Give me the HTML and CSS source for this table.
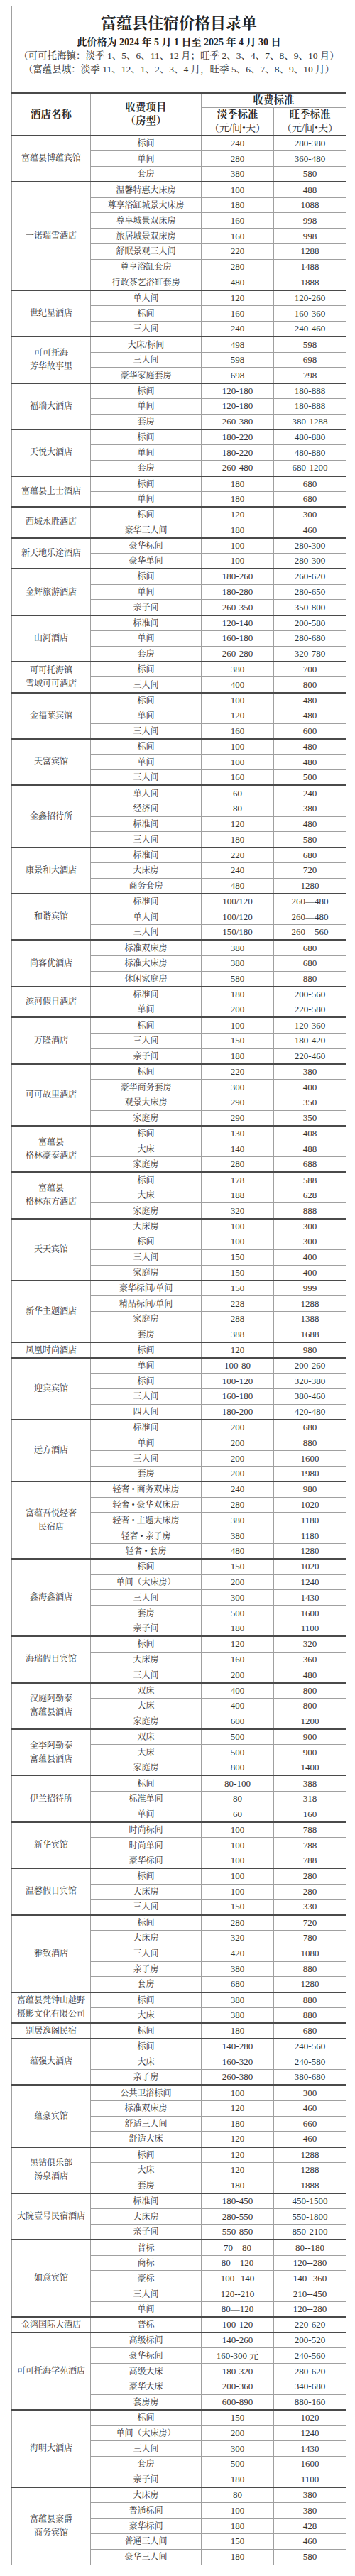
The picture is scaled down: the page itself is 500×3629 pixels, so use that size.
FILE: index.html
```html
<!DOCTYPE html>
<html lang="zh-CN">
<head>
<meta charset="utf-8">
<title>富蕴县住宿价格目录单</title>
<link rel="stylesheet" href="styles.css">
</head>
<body>
<div class="sheet">
<table class="price-table">
<colgroup>
<col class="c-name"><col class="c-type"><col class="c-low"><col class="c-high">
</colgroup>
<thead>
<tr class="title-row"><th colspan="4" class="title-cell">
<div class="title-block">
<div class="title">富蕴县住宿价格目录单</div>
<div class="subtitle">此价格为 2024 年 5 月 1 日至 2025 年 4 月 30 日</div>
<div class="note">（可可托海镇：淡季 1、5、6、11、12 月；旺季 2、3、4、7、8、9、10 月）</div>
<div class="note">（富蕴县城：淡季 11、12、1、2、3、4 月，旺季 5、6、7、8、9、10 月）</div>
</div>
</th></tr>
<tr class="head1"><th rowspan="2" class="hd">酒店名称</th><th rowspan="2" class="hd">收费项目<br>（房型）</th><th colspan="2" class="hd">收费标准</th></tr>
<tr class="head2"><th class="hd">淡季标准<br><span class="unit">（元/间•天）</span></th><th class="hd">旺季标准<br><span class="unit">（元/间•天）</span></th></tr>
</thead>
<tbody>
<tr class="g"><td rowspan="3" class="name">富蕴县博蕴宾馆</td><td>标间</td><td class="n">240</td><td class="n">280-380</td></tr>
<tr><td>单间</td><td class="n">280</td><td class="n">360-480</td></tr>
<tr><td>套房</td><td class="n">380</td><td class="n">580</td></tr>

<tr class="g"><td rowspan="7" class="name">一诺瑞雪酒店</td><td>温馨特惠大床房</td><td class="n">100</td><td class="n">488</td></tr>
<tr><td>尊享浴缸城景大床房</td><td class="n">180</td><td class="n">1088</td></tr>
<tr><td>尊享城景双床房</td><td class="n">160</td><td class="n">998</td></tr>
<tr><td>旅居城景双床房</td><td class="n">160</td><td class="n">998</td></tr>
<tr><td>舒眠景观三人间</td><td class="n">220</td><td class="n">1288</td></tr>
<tr><td>尊享浴缸套房</td><td class="n">280</td><td class="n">1488</td></tr>
<tr><td>行政茶艺浴缸套房</td><td class="n">480</td><td class="n">1888</td></tr>

<tr class="g"><td rowspan="3" class="name">世纪星酒店</td><td>单人间</td><td class="n">120</td><td class="n">120-260</td></tr>
<tr><td>标间</td><td class="n">160</td><td class="n">160-360</td></tr>
<tr><td>三人间</td><td class="n">240</td><td class="n">240-460</td></tr>

<tr class="g"><td rowspan="3" class="name">可可托海<br>芳华故事里</td><td>大床/标间</td><td class="n">498</td><td class="n">598</td></tr>
<tr><td>三人间</td><td class="n">598</td><td class="n">698</td></tr>
<tr><td>豪华家庭套房</td><td class="n">698</td><td class="n">798</td></tr>

<tr class="g"><td rowspan="3" class="name">福瑞大酒店</td><td>标间</td><td class="n">120-180</td><td class="n">180-888</td></tr>
<tr><td>单间</td><td class="n">120-180</td><td class="n">180-888</td></tr>
<tr><td>套房</td><td class="n">260-380</td><td class="n">380-1288</td></tr>

<tr class="g"><td rowspan="3" class="name">天悦大酒店</td><td>标间</td><td class="n">180-220</td><td class="n">480-880</td></tr>
<tr><td>单间</td><td class="n">180-220</td><td class="n">480-880</td></tr>
<tr><td>套房</td><td class="n">260-480</td><td class="n">680-1200</td></tr>

<tr class="g"><td rowspan="2" class="name">富蕴县上士酒店</td><td>标间</td><td class="n">180</td><td class="n">680</td></tr>
<tr><td>单间</td><td class="n">180</td><td class="n">680</td></tr>

<tr class="g"><td rowspan="2" class="name">西域永胜酒店</td><td>标间</td><td class="n">120</td><td class="n">300</td></tr>
<tr><td>豪华三人间</td><td class="n">180</td><td class="n">460</td></tr>

<tr class="g"><td rowspan="2" class="name">新天地乐途酒店</td><td>豪华标间</td><td class="n">100</td><td class="n">280-300</td></tr>
<tr><td>豪华单间</td><td class="n">100</td><td class="n">280-300</td></tr>

<tr class="g"><td rowspan="3" class="name">金辉旅游酒店</td><td>标间</td><td class="n">180-260</td><td class="n">260-620</td></tr>
<tr><td>单间</td><td class="n">180-280</td><td class="n">280-650</td></tr>
<tr><td>亲子间</td><td class="n">260-350</td><td class="n">350-800</td></tr>

<tr class="g"><td rowspan="3" class="name">山河酒店</td><td>标准间</td><td class="n">120-140</td><td class="n">200-580</td></tr>
<tr><td>单间</td><td class="n">160-180</td><td class="n">280-680</td></tr>
<tr><td>套房</td><td class="n">260-280</td><td class="n">320-780</td></tr>

<tr class="g"><td rowspan="2" class="name">可可托海镇<br>雪域可可酒店</td><td>标间</td><td class="n">380</td><td class="n">700</td></tr>
<tr><td>三人间</td><td class="n">400</td><td class="n">800</td></tr>

<tr class="g"><td rowspan="3" class="name">金福莱宾馆</td><td>标间</td><td class="n">100</td><td class="n">480</td></tr>
<tr><td>单间</td><td class="n">120</td><td class="n">480</td></tr>
<tr><td>三人间</td><td class="n">160</td><td class="n">600</td></tr>

<tr class="g"><td rowspan="3" class="name">天富宾馆</td><td>标间</td><td class="n">100</td><td class="n">480</td></tr>
<tr><td>单间</td><td class="n">100</td><td class="n">480</td></tr>
<tr><td>三人间</td><td class="n">160</td><td class="n">500</td></tr>

<tr class="g"><td rowspan="4" class="name">金鑫招待所</td><td>单人间</td><td class="n">60</td><td class="n">240</td></tr>
<tr><td>经济间</td><td class="n">80</td><td class="n">380</td></tr>
<tr><td>标准间</td><td class="n">120</td><td class="n">480</td></tr>
<tr><td>三人间</td><td class="n">180</td><td class="n">580</td></tr>

<tr class="g"><td rowspan="3" class="name">康景和大酒店</td><td>标准间</td><td class="n">220</td><td class="n">680</td></tr>
<tr><td>大床房</td><td class="n">240</td><td class="n">720</td></tr>
<tr><td>商务套房</td><td class="n">480</td><td class="n">1280</td></tr>

<tr class="g"><td rowspan="3" class="name">和谐宾馆</td><td>标准间</td><td class="n">100/120</td><td class="n">260—480</td></tr>
<tr><td>单人间</td><td class="n">100/120</td><td class="n">260—480</td></tr>
<tr><td>三人间</td><td class="n">150/180</td><td class="n">260—560</td></tr>

<tr class="g"><td rowspan="3" class="name">尚客优酒店</td><td>标准双床房</td><td class="n">380</td><td class="n">680</td></tr>
<tr><td>标准大床房</td><td class="n">380</td><td class="n">680</td></tr>
<tr><td>休闲家庭房</td><td class="n">580</td><td class="n">880</td></tr>

<tr class="g"><td rowspan="2" class="name">滨河假日酒店</td><td>标准间</td><td class="n">180</td><td class="n">200-560</td></tr>
<tr><td>单间</td><td class="n">200</td><td class="n">220-580</td></tr>

<tr class="g"><td rowspan="3" class="name">万隆酒店</td><td>标间</td><td class="n">100</td><td class="n">120-360</td></tr>
<tr><td>三人间</td><td class="n">150</td><td class="n">180-420</td></tr>
<tr><td>亲子间</td><td class="n">180</td><td class="n">220-460</td></tr>

<tr class="g"><td rowspan="4" class="name">可可故里酒店</td><td>标间</td><td class="n">220</td><td class="n">380</td></tr>
<tr><td>豪华商务套房</td><td class="n">300</td><td class="n">400</td></tr>
<tr><td>观景大床房</td><td class="n">290</td><td class="n">350</td></tr>
<tr><td>家庭房</td><td class="n">290</td><td class="n">350</td></tr>

<tr class="g"><td rowspan="3" class="name">富蕴县<br>格林豪泰酒店</td><td>标间</td><td class="n">130</td><td class="n">408</td></tr>
<tr><td>大床</td><td class="n">140</td><td class="n">488</td></tr>
<tr><td>家庭房</td><td class="n">280</td><td class="n">688</td></tr>

<tr class="g"><td rowspan="3" class="name">富蕴县<br>格林东方酒店</td><td>标间</td><td class="n">178</td><td class="n">588</td></tr>
<tr><td>大床</td><td class="n">188</td><td class="n">628</td></tr>
<tr><td>家庭房</td><td class="n">320</td><td class="n">888</td></tr>

<tr class="g"><td rowspan="4" class="name">天天宾馆</td><td>大床房</td><td class="n">100</td><td class="n">300</td></tr>
<tr><td>标间</td><td class="n">100</td><td class="n">300</td></tr>
<tr><td>三人间</td><td class="n">150</td><td class="n">400</td></tr>
<tr><td>家庭房</td><td class="n">150</td><td class="n">400</td></tr>

<tr class="g"><td rowspan="4" class="name">新华主题酒店</td><td>豪华标间/单间</td><td class="n">150</td><td class="n">999</td></tr>
<tr><td>精品标间/单间</td><td class="n">228</td><td class="n">1288</td></tr>
<tr><td>家庭房</td><td class="n">288</td><td class="n">1388</td></tr>
<tr><td>套房</td><td class="n">388</td><td class="n">1688</td></tr>

<tr class="g"><td class="name">凤凰时尚酒店</td><td>标间</td><td class="n">120</td><td class="n">980</td></tr>

<tr class="g"><td rowspan="4" class="name">迎宾宾馆</td><td>单间</td><td class="n">100-80</td><td class="n">200-260</td></tr>
<tr><td>标间</td><td class="n">100-120</td><td class="n">320-380</td></tr>
<tr><td>三人间</td><td class="n">160-180</td><td class="n">380-460</td></tr>
<tr><td>四人间</td><td class="n">180-200</td><td class="n">420-480</td></tr>

<tr class="g"><td rowspan="4" class="name">远方酒店</td><td>标准间</td><td class="n">200</td><td class="n">680</td></tr>
<tr><td>单间</td><td class="n">200</td><td class="n">880</td></tr>
<tr><td>三人间</td><td class="n">200</td><td class="n">1600</td></tr>
<tr><td>套房</td><td class="n">200</td><td class="n">1980</td></tr>

<tr class="g"><td rowspan="5" class="name">富蕴吾悦轻奢<br>民宿店</td><td>轻奢 • 商务双床房</td><td class="n">240</td><td class="n">980</td></tr>
<tr><td>轻奢 • 豪华双床房</td><td class="n">280</td><td class="n">1020</td></tr>
<tr><td>轻奢 • 主题大床房</td><td class="n">380</td><td class="n">1180</td></tr>
<tr><td>轻奢 • 亲子房</td><td class="n">380</td><td class="n">1180</td></tr>
<tr><td>轻奢 • 套房</td><td class="n">480</td><td class="n">1280</td></tr>

<tr class="g"><td rowspan="5" class="name">鑫海鑫酒店</td><td>标间</td><td class="n">150</td><td class="n">1020</td></tr>
<tr><td>单间（大床房）</td><td class="n">200</td><td class="n">1240</td></tr>
<tr><td>三人间</td><td class="n">300</td><td class="n">1430</td></tr>
<tr><td>套房</td><td class="n">500</td><td class="n">1600</td></tr>
<tr><td>亲子间</td><td class="n">180</td><td class="n">1100</td></tr>

<tr class="g"><td rowspan="3" class="name">海瑞假日宾馆</td><td>标间</td><td class="n">120</td><td class="n">320</td></tr>
<tr><td>大床房</td><td class="n">160</td><td class="n">360</td></tr>
<tr><td>三人间</td><td class="n">200</td><td class="n">480</td></tr>

<tr class="g"><td rowspan="3" class="name">汉庭阿勒泰<br>富蕴县酒店</td><td>双床</td><td class="n">400</td><td class="n">800</td></tr>
<tr><td>大床</td><td class="n">400</td><td class="n">800</td></tr>
<tr><td>家庭房</td><td class="n">600</td><td class="n">1200</td></tr>

<tr class="g"><td rowspan="3" class="name">全季阿勒泰<br>富蕴县酒店</td><td>双床</td><td class="n">500</td><td class="n">900</td></tr>
<tr><td>大床</td><td class="n">500</td><td class="n">900</td></tr>
<tr><td>家庭房</td><td class="n">800</td><td class="n">1400</td></tr>

<tr class="g"><td rowspan="3" class="name">伊兰招待所</td><td>标间</td><td class="n">80-100</td><td class="n">388</td></tr>
<tr><td>标准单间</td><td class="n">80</td><td class="n">318</td></tr>
<tr><td>单间</td><td class="n">60</td><td class="n">160</td></tr>

<tr class="g"><td rowspan="3" class="name">新华宾馆</td><td>时尚标间</td><td class="n">100</td><td class="n">788</td></tr>
<tr><td>时尚单间</td><td class="n">100</td><td class="n">788</td></tr>
<tr><td>豪华标间</td><td class="n">100</td><td class="n">788</td></tr>

<tr class="g"><td rowspan="3" class="name">温馨假日宾馆</td><td>标间</td><td class="n">100</td><td class="n">280</td></tr>
<tr><td>大床房</td><td class="n">100</td><td class="n">280</td></tr>
<tr><td>三人间</td><td class="n">150</td><td class="n">330</td></tr>

<tr class="g"><td rowspan="5" class="name">雅致酒店</td><td>标间</td><td class="n">280</td><td class="n">720</td></tr>
<tr><td>大床房</td><td class="n">320</td><td class="n">780</td></tr>
<tr><td>三人间</td><td class="n">420</td><td class="n">1080</td></tr>
<tr><td>亲子房</td><td class="n">380</td><td class="n">880</td></tr>
<tr><td>套房</td><td class="n">680</td><td class="n">1280</td></tr>

<tr class="g"><td rowspan="2" class="name">富蕴县梵钟山越野<br>摄影文化有限公司</td><td>标间</td><td class="n">380</td><td class="n">880</td></tr>
<tr><td>大床</td><td class="n">380</td><td class="n">880</td></tr>

<tr class="g"><td class="name">别居逸阁民宿</td><td>标间</td><td class="n">180</td><td class="n">680</td></tr>

<tr class="g"><td rowspan="3" class="name">蕴强大酒店</td><td>标间</td><td class="n">140-280</td><td class="n">240-560</td></tr>
<tr><td>大床</td><td class="n">160-320</td><td class="n">240-580</td></tr>
<tr><td>亲子房</td><td class="n">260-380</td><td class="n">380-680</td></tr>

<tr class="g"><td rowspan="4" class="name">蕴豪宾馆</td><td>公共卫浴标间</td><td class="n">100</td><td class="n">300</td></tr>
<tr><td>标准双床房</td><td class="n">120</td><td class="n">460</td></tr>
<tr><td>舒适三人间</td><td class="n">180</td><td class="n">660</td></tr>
<tr><td>舒适大床</td><td class="n">120</td><td class="n">460</td></tr>

<tr class="g"><td rowspan="3" class="name">黑钻俱乐部<br>汤泉酒店</td><td>标间</td><td class="n">120</td><td class="n">1288</td></tr>
<tr><td>大床</td><td class="n">120</td><td class="n">1288</td></tr>
<tr><td>套房</td><td class="n">180</td><td class="n">1888</td></tr>

<tr class="g"><td rowspan="3" class="name">大院壹号民宿酒店</td><td>标准间</td><td class="n">180-450</td><td class="n">450-1500</td></tr>
<tr><td>大床房</td><td class="n">280-550</td><td class="n">550-1800</td></tr>
<tr><td>亲子间</td><td class="n">550-850</td><td class="n">850-2100</td></tr>

<tr class="g"><td rowspan="5" class="name">如意宾馆</td><td>普标</td><td class="n">70—80</td><td class="n">80--180</td></tr>
<tr><td>商标</td><td class="n">80—120</td><td class="n">120--280</td></tr>
<tr><td>豪标</td><td class="n">100--140</td><td class="n">140--360</td></tr>
<tr><td>三人间</td><td class="n">120--210</td><td class="n">210--450</td></tr>
<tr><td>单间</td><td class="n">80—120</td><td class="n">120--280</td></tr>

<tr class="g"><td class="name">金鸿国际大酒店</td><td>普标</td><td class="n">100-120</td><td class="n">220-620</td></tr>

<tr class="g"><td rowspan="5" class="name">可可托海学苑酒店</td><td>高级标间</td><td class="n">140-260</td><td class="n">200-520</td></tr>
<tr><td>豪华标间</td><td class="n">160-300 元</td><td class="n">240-560</td></tr>
<tr><td>高级大床</td><td class="n">180-320</td><td class="n">280-620</td></tr>
<tr><td>豪华大床</td><td class="n">200-360</td><td class="n">340-680</td></tr>
<tr><td>套房房</td><td class="n">600-890</td><td class="n">880-160</td></tr>

<tr class="g"><td rowspan="5" class="name">海明大酒店</td><td>标间</td><td class="n">150</td><td class="n">1020</td></tr>
<tr><td>单间（大床房）</td><td class="n">200</td><td class="n">1240</td></tr>
<tr><td>三人间</td><td class="n">300</td><td class="n">1430</td></tr>
<tr><td>套房</td><td class="n">500</td><td class="n">1600</td></tr>
<tr><td>亲子间</td><td class="n">180</td><td class="n">1100</td></tr>

<tr class="g"><td rowspan="5" class="name">富蕴县豪爵<br>商务宾馆</td><td>大床房</td><td class="n">80</td><td class="n">380</td></tr>
<tr><td>普通标间</td><td class="n">100</td><td class="n">380</td></tr>
<tr><td>豪华标间</td><td class="n">180</td><td class="n">428</td></tr>
<tr><td>普通三人间</td><td class="n">150</td><td class="n">460</td></tr>
<tr><td>豪华三人间</td><td class="n">180</td><td class="n">580</td></tr>
</tbody>
</table>
</div>
</body>
</html>
```
FILE: styles.css
```css
html, body {
  margin: 0;
  padding: 0;
  background: #ffffff;
}

.sheet {
  margin: 8px 0 0 16px;
  width: 471px;
}

.price-table {
  width: 471px;
  border-collapse: collapse;
  table-layout: fixed;
  font-family: "Liberation Serif", "Noto Serif CJK SC", "Noto Sans CJK SC", serif;
  color: #333333;
  font-size: 12px;
}

.c-name { width: 111px; }
.c-type { width: 156px; }
.c-low { width: 102px; }
.c-high { width: 102px; }

.price-table th,
.price-table td {
  border: 1px solid #a0a0a0;
  padding: 0;
  text-align: center;
  vertical-align: middle;
  white-space: nowrap;
  line-height: 16px;
  font-weight: normal;
}

.price-table tbody tr {
  height: 21.8px;
}

.price-table tr.g td {
  border-top: 2px solid #4a4a4a;
}

.price-table td.n {
  font-size: 13px;
}

.price-table td.name {
  line-height: 19px;
}

.title-cell {
  height: 121px;
  border-bottom: 2px solid #4a4a4a !important;
}

.title-block {
  display: flex;
  flex-direction: column;
  align-items: center;
  padding: 0 0 12px;
}

.title {
  font-size: 22px;
  line-height: 26px;
  font-weight: bold;
  color: #222222;
}

.subtitle {
  margin-top: 4px;
  font-size: 14px;
  line-height: 19px;
  font-weight: bold;
  color: #222222;
}

.note {
  font-size: 13.5px;
  line-height: 19px;
  color: #333333;
}

.head1 {
  height: 20px;
}

.head2 {
  height: 39px;
}

.price-table th.hd {
  font-size: 14.5px;
  font-weight: bold;
  line-height: 19px;
  color: #2a2a2a;
}

.price-table .head2 th.hd {
  border-bottom: 2px solid #4a4a4a;
}

.price-table .head1 th.hd[rowspan] {
  border-bottom: 2px solid #4a4a4a;
}

.unit {
  font-weight: normal;
  font-size: 14px;
}
```
